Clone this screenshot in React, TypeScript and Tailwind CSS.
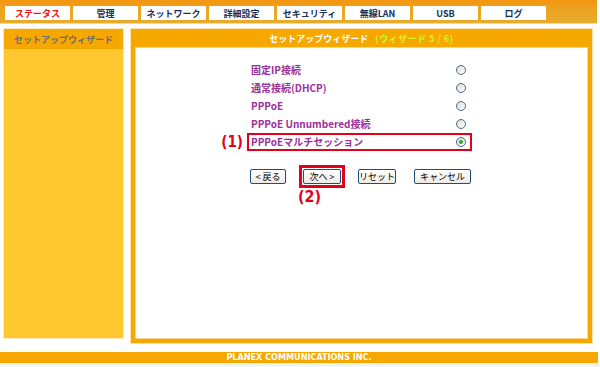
import React from "react";

const JP = { fontFamily: '"Noto Sans CJK JP", "DejaVu Sans", sans-serif' };
const NUM = { fontFamily: '"DejaVu Sans Condensed", "DejaVu Sans", sans-serif' };

const tabs = ["ステータス", "管理", "ネットワーク", "詳細設定", "セキュリティ", "無線LAN", "USB", "ログ"];

function Radio({ checked }: { checked?: boolean }) {
  return (
    <div className="w-[10px] h-[10px] rounded-full border border-[#4a6a90] bg-[linear-gradient(135deg,#dcdcd4,#ffffff)] flex items-center justify-center">
      {checked && <div className="w-[4px] h-[4px] rounded-full bg-[#2fa82f]" />}
    </div>
  );
}

function Btn({ children, w }: { children: React.ReactNode; w: string }) {
  return (
    <div
      className={`${w} h-[15px] rounded-[2px] border border-[#1d4f7c] bg-[linear-gradient(180deg,#ffffff,#ecebe6)] flex items-center justify-center text-[9px] text-black leading-none`}
      style={JP}
    >
      {children}
    </div>
  );
}

export default function App() {
  const rows = ["固定IP接続", "通常接続(DHCP)", "PPPoE", "PPPoE Unnumbered接続", "PPPoEマルチセッション"];
  return (
    <div className="w-[600px] h-[367px] bg-white flex flex-col overflow-hidden" style={JP}>
      {/* top bar */}
      <div className="h-[23px] w-[597px] bg-[linear-gradient(180deg,#f39610_0%,#eca522_45%,#e8ab2c_100%)] flex items-start pt-[6px] pl-[5px] gap-[3px] shrink-0">
        {tabs.map((t, i) => (
          <div
            key={t}
            className={`w-[65px] h-[14px] bg-white flex items-center justify-center text-[9px] font-bold leading-none ${i === 0 ? "text-[#f01020]" : "text-[#15305a]"}`}
          >
            {t}
          </div>
        ))}
      </div>
      <div className="h-[1px] w-[597px] bg-[#f6d8a0] shrink-0" />

      {/* body */}
      <div className="flex items-start pt-[4px] pl-[3px] h-[328px] shrink-0">
        {/* sidebar */}
        <div className="w-[121px] h-[311px] border border-[#fde9c2] flex flex-col">
          <div className="h-[20px] bg-[#f7a800] flex items-center justify-center text-[9px] font-bold text-[#6e6e6e] leading-none">
            セットアップウィザード
          </div>
          <div className="flex-1 bg-[#ffc82f]" />
        </div>

        {/* main panel */}
        <div className="ml-[6px] w-[463px] h-[316px] border border-[#fde2b0] bg-[#f7a800] flex flex-col">
          <div className="h-[18px] flex items-center justify-center text-[9px] font-bold leading-none gap-[7px]">
            <span className="text-white">セットアップウィザード</span>
            <span className="text-[#ccf23a] tracking-[0.5px]">(ウィザード 5 / 6)</span>
          </div>
          <div className="flex-1 mx-[4px] mb-[4px] bg-white border border-[#fbd48e] flex flex-col">
            <div className="mt-[13px] ml-[111px] w-[225px] flex flex-col">
              {rows.map((r, i) => (
                <div
                  key={r}
                  className={`relative h-[18px] flex items-center justify-between pl-[2px] pr-[4px] border-[2px] ${i === 4 ? "border-[#e3001b]" : "border-transparent"}`}
                >
                  {i === 4 && (
                    <span className="absolute right-full mr-[6px] text-[15px] font-bold text-[#e3001b] leading-none" style={NUM}>
                      (1)
                    </span>
                  )}
                  <span className="text-[10px] font-bold text-[#9b2f9b] leading-none">{r}</span>
                  <Radio checked={i === 4} />
                </div>
              ))}
            </div>

            <div className="mt-[14px] ml-[114px] flex items-center">
              <Btn w="w-[36px]">&lt; 戻る</Btn>
              <div className="relative ml-[13px] border-[3px] border-[#e3001b] p-[1px]">
                <Btn w="w-[38px]">次へ &gt;</Btn>
                <span className="absolute top-full left-[-4px] mt-[4px] text-[16px] font-bold text-[#e3001b] leading-none" style={NUM}>
                  (2)
                </span>
              </div>
              <div className="ml-[13px]">
                <Btn w="w-[38px]">リセット</Btn>
              </div>
              <div className="ml-[18px]">
                <Btn w="w-[57px]">キャンセル</Btn>
              </div>
            </div>
          </div>
        </div>
      </div>

      {/* footer */}
      <div
        className="h-[11px] w-[598px] bg-[#f6a800] flex items-center justify-center text-white text-[9px] font-bold leading-none shrink-0"
        style={NUM}
      >
        PLANEX COMMUNICATIONS INC.
      </div>
      <div className="flex-1 bg-[#f3f3ee]" />
    </div>
  );
}
